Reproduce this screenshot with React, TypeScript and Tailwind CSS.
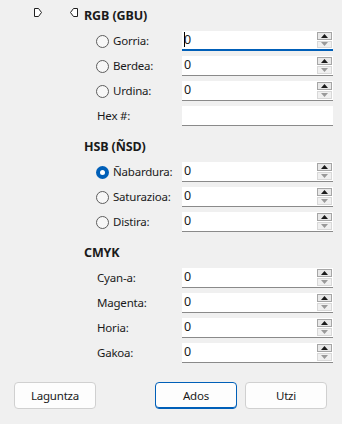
import React from 'react';

type RowProps = {
  label: string;
  radio?: boolean;
  checked?: boolean;
  spin?: boolean;
  focused?: boolean;
  value?: string;
};

const Marker: React.FC<{ flip?: boolean }> = ({ flip }) => (
  <svg width="8" height="9" viewBox="0 0 8 9" className={flip ? '-scale-x-100' : ''}>
    <path d="M0.5 0.5H4.5L7.5 4.5L4.5 8.5H0.5Z" fill="#ffffff" stroke="#1f1f1f" strokeWidth="1" />
  </svg>
);

const Radio: React.FC<{ checked?: boolean }> = ({ checked }) =>
  checked ? (
    <span className="flex h-[13px] w-[13px] items-center justify-center rounded-full bg-[#005fb8]">
      <span className="h-[5px] w-[5px] rounded-full bg-white"></span>
    </span>
  ) : (
    <span className="block h-[13px] w-[13px] rounded-full border border-[#5d5d5d] bg-[#f7f7f7]"></span>
  );

const Spin: React.FC = () => (
  <div className="flex flex-col gap-px py-px pr-px">
    <div className="flex h-[8px] w-[15px] items-center justify-center border border-[#a6a6a6] bg-[#e8e8e8]">
      <svg width="7" height="4" viewBox="0 0 7 4">
        <path d="M3.5 0L7 4H0Z" fill="#1a1a1a" />
      </svg>
    </div>
    <div className="flex h-[8px] w-[15px] items-center justify-center border border-[#d8d8d8] bg-[#f0f0f0]">
      <svg width="7" height="4" viewBox="0 0 7 4">
        <path d="M0 0H7L3.5 4Z" fill="#9a9a9a" />
      </svg>
    </div>
  </div>
);

const Row: React.FC<RowProps> = ({ label, radio, checked, spin = true, focused, value = '0' }) => (
  <div className="flex h-[20px] items-center">
    <div className="flex w-[98px] items-center pl-[12px]">
      {radio ? (
        <>
          <Radio checked={checked} />
          <span className="ml-[4px]">{label}</span>
        </>
      ) : (
        <span className="pl-[1px]">{label}</span>
      )}
    </div>
    <div
      className={`flex h-[20px] w-[151px] items-stretch bg-white ${
        focused ? 'border-b-2 border-[#005fb8]' : 'border-b border-[#8a8a8a]'
      }`}
    >
      <div className="relative flex flex-1 items-center pl-[2px] text-[12.5px] tracking-normal text-[#1a1a1a]">
        {spin && value}
        {focused && <span className="absolute left-[2px] top-[1px] h-[15px] w-px bg-black"></span>}
      </div>
      {spin && <Spin />}
    </div>
  </div>
);

const Heading: React.FC<{ children: React.ReactNode }> = ({ children }) => (
  <div className="mb-[5px] flex h-[20px] items-center text-[12.5px] font-bold tracking-[-0.1px] text-[#1a1a1a]">
    {children}
  </div>
);

const Btn: React.FC<{ children: React.ReactNode; primary?: boolean }> = ({ children, primary }) => (
  <button
    className={`flex h-[27px] w-[82px] items-center justify-center rounded-[4px] bg-[#fdfdfd] text-[#1a1a1a] ${
      primary ? 'border border-[#005fb8] shadow-[inset_0_-1px_0_#005fb8]' : 'border border-[#d0d0d0]'
    }`}
  >
    {children}
  </button>
);

export default function App() {
  return (
    <div className="flex h-[424px] w-[342px] flex-col bg-[#f0f0f0] font-['Noto_Sans',sans-serif] text-[11.5px] tracking-[-0.2px] text-[#1a1a1a]">
      <div className="flex">
        <div className="flex w-[84px] items-start gap-[28px] pl-[34px] pt-[8px]">
          <Marker />
          <Marker flip />
        </div>
        <div className="flex flex-col gap-[11px] pt-[6px]">
          <div className="flex flex-col">
            <Heading>RGB (GBU)</Heading>
            <div className="flex flex-col gap-[5px]">
              <Row label="Gorria:" radio focused />
              <Row label="Berdea:" radio />
              <Row label="Urdina:" radio />
              <Row label="Hex #:" spin={false} />
            </div>
          </div>
          <div className="flex flex-col">
            <Heading>HSB (ÑSD)</Heading>
            <div className="flex flex-col gap-[5px]">
              <Row label="Ñabardura:" radio checked />
              <Row label="Saturazioa:" radio />
              <Row label="Distira:" radio />
            </div>
          </div>
          <div className="flex flex-col">
            <Heading>CMYK</Heading>
            <div className="flex flex-col gap-[5px]">
              <Row label="Cyan-a:" />
              <Row label="Magenta:" />
              <Row label="Horia:" />
              <Row label="Gakoa:" />
            </div>
          </div>
        </div>
      </div>
      <div className="mt-[19px] flex items-center pl-[14px] pr-[15px]">
        <Btn>Laguntza</Btn>
        <div className="ml-auto flex gap-[8px]">
          <Btn primary>Ados</Btn>
          <Btn>Utzi</Btn>
        </div>
      </div>
    </div>
  );
}
